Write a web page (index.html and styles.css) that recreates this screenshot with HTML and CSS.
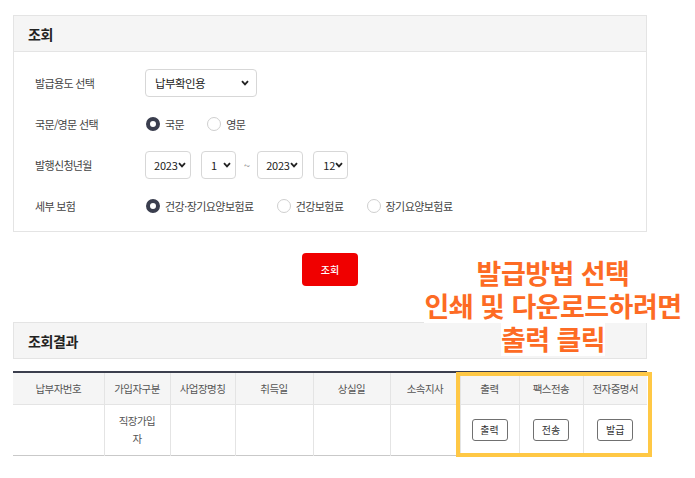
FILE: index.html
```html
<!DOCTYPE html>
<html lang="ko">
<head>
<meta charset="utf-8">
<title>조회</title>
<link rel="stylesheet" href="styles.css">
</head>
<body>
<div class="page">
  <section class="panel">
    <div class="panel-head">조회</div>
    <div class="form">
      <div class="row">
        <div class="label">발급용도 선택</div>
        <div class="ctrl">
          <div class="sel sel-wide"><span>납부확인용</span><svg class="chev" viewBox="0 0 8 6" width="8" height="6"><path d="M1 1.2 L4 4.4 L7 1.2" fill="none" stroke="#222" stroke-width="1.8"/></svg></div>
        </div>
      </div>
      <div class="row">
        <div class="label">국문/영문 선택</div>
        <div class="ctrl">
          <label class="opt"><span class="radio on"></span>국문</label>
          <label class="opt"><span class="radio"></span>영문</label>
        </div>
      </div>
      <div class="row">
        <div class="label">발행신청년월</div>
        <div class="ctrl">
          <div class="sel sel-year"><span>2023</span><svg class="chev" viewBox="0 0 8 6" width="8" height="6"><path d="M1 1.2 L4 4.4 L7 1.2" fill="none" stroke="#222" stroke-width="1.8"/></svg></div>
          <div class="sel sel-month"><span>1</span><svg class="chev" viewBox="0 0 8 6" width="8" height="6"><path d="M1 1.2 L4 4.4 L7 1.2" fill="none" stroke="#222" stroke-width="1.8"/></svg></div>
          <span class="tilde">~</span>
          <div class="sel sel-year"><span>2023</span><svg class="chev" viewBox="0 0 8 6" width="8" height="6"><path d="M1 1.2 L4 4.4 L7 1.2" fill="none" stroke="#222" stroke-width="1.8"/></svg></div>
          <div class="sel sel-month"><span>12</span><svg class="chev" viewBox="0 0 8 6" width="8" height="6"><path d="M1 1.2 L4 4.4 L7 1.2" fill="none" stroke="#222" stroke-width="1.8"/></svg></div>
        </div>
      </div>
      <div class="row">
        <div class="label">세부 보험</div>
        <div class="ctrl">
          <label class="opt"><span class="radio on"></span>건강·장기요양보험료</label>
          <label class="opt"><span class="radio"></span>건강보험료</label>
          <label class="opt"><span class="radio"></span>장기요양보험료</label>
        </div>
      </div>
    </div>
  </section>

  <div class="btn-area"><button class="btn-red">조회</button></div>

  <section class="result">
    <div class="panel-head solo">조회결과</div>
    <table class="grid">
      <colgroup>
        <col class="c1"><col class="c2"><col class="c3"><col class="c4"><col class="c5"><col class="c6"><col class="c7"><col class="c8"><col class="c9">
      </colgroup>
      <thead>
        <tr>
          <th>납부자번호</th><th>가입자구분</th><th>사업장명칭</th><th>취득일</th><th>상실일</th><th>소속지사</th><th>출력</th><th>팩스전송</th><th>전자증명서</th>
        </tr>
      </thead>
      <tbody>
        <tr>
          <td></td><td class="wrap">직장가입자</td><td></td><td></td><td></td><td></td>
          <td><button class="btn-sm">출력</button></td>
          <td><button class="btn-sm">전송</button></td>
          <td><button class="btn-sm">발급</button></td>
        </tr>
      </tbody>
    </table>
  </section>
</div>

<div class="highlight"></div>
<div class="note"><span>발급방법 선택</span><span>인쇄 및 다운로드하려면</span><span>출력 클릭</span></div>
</body>
</html>
```

FILE: styles.css
```css
* { box-sizing: border-box; }
html, body { margin: 0; padding: 0; background: #fff; }
body {
  font-family: "Noto Sans CJK KR", "Noto Sans", sans-serif;
  color: #444;
  width: 695px;
  height: 478px;
  position: relative;
  overflow: hidden;
}
.page {
  padding: 15px 0 0 13px;
  width: 647px;
}
.panel {
  border: 1px solid #e4e4e4;
}
.panel-head {
  height: 36px;
  background: #f5f5f5;
  border-bottom: 1px solid #e4e4e4;
  padding-left: 14px;
  display: flex;
  align-items: center;
  font-size: 14px;
  font-weight: 700;
  color: #222;
  letter-spacing: -0.03em;
}
.panel-head.solo {
  height: 37px;
  border: 1px solid #e4e4e4;
}
.form {
  padding: 17px 0 11px 21px;
  display: flex;
  flex-direction: column;
  gap: 13px;
}
.row {
  display: flex;
  align-items: center;
  height: 28px;
}
.label {
  width: 110px;
  font-size: 11px;
  color: #444;
  letter-spacing: -0.06em;
}
.ctrl {
  display: flex;
  align-items: center;
  font-size: 11px;
  color: #444;
}
.sel {
  height: 28px;
  border: 1px solid #d7d7d7;
  border-radius: 4px;
  display: flex;
  align-items: center;
  justify-content: space-between;
  font-size: 11.5px;
  color: #222;
  background: #fff;
}
.sel-wide { width: 112px; padding: 0 7px 0 9px; letter-spacing: -0.05em; }
.sel-year { width: 46px; padding: 0 4px 0 8px; font-size: 11px; letter-spacing: -0.02em; }
.sel-month { width: 35px; padding: 0 4px 0 9px; font-size: 11px; margin-left: 10px; }
.tilde { color: #888; font-size: 11px; margin: 0 7px 0 8px; }
.chev { flex: none; }
.opt {
  display: flex;
  align-items: center;
  margin-right: 22px;
  letter-spacing: -0.05em;
}
.radio {
  width: 14px;
  height: 14px;
  border-radius: 50%;
  border: 1px solid #cfcfcf;
  background: #fff;
  margin: 0 5px 0 1px;
  flex: none;
}
.radio.on {
  border: 4px solid #3a3e4e;
}
.btn-area {
  display: flex;
  justify-content: center;
  margin-top: 21px;
}
.btn-red {
  width: 56px;
  height: 33px;
  border: 0;
  border-radius: 4px;
  background: #f00000;
  color: #fff;
  font-family: inherit;
  font-size: 10px;
  font-weight: 500;
  padding: 0;
}
.result { margin-top: 36px; }
.grid {
  margin-top: 12px;
  width: 634px;
  border-collapse: collapse;
  table-layout: fixed;
  border-top: 2px solid #3c3f4e;
  border-bottom: 1px solid #c9c9c9;
  font-size: 10.5px;
  color: #555;
  letter-spacing: -0.05em;
}
.c1 { width: 91px; } .c2 { width: 66px; } .c3 { width: 65px; } .c4 { width: 78px; }
.c5 { width: 77px; } .c6 { width: 70px; } .c7 { width: 59px; } .c8 { width: 64px; } .c9 { width: 64px; }
.grid th {
  height: 32px;
  background: #f5f5f5;
  font-weight: 400;
  border-left: 1px solid #e4e4e4;
  border-bottom: 1px solid #e4e4e4;
  padding: 0;
}
.grid td {
  height: 51px;
  border-left: 1px solid #e4e4e4;
  text-align: center;
  padding: 0 10px;
  line-height: 18px;
}
.grid th:first-child, .grid td:first-child { border-left: 0; }
.btn-sm {
  width: 36px;
  height: 22px;
  border: 1px solid #707070;
  border-radius: 3px;
  background: #fff;
  font-family: inherit;
  font-size: 10px;
  color: #333;
  padding: 0;
}
.highlight {
  position: absolute;
  left: 456px;
  top: 372px;
  width: 196px;
  height: 85px;
  border: 4px solid #ffc845;
}
.note {
  position: absolute;
  left: 400px;
  top: 257px;
  width: 306px;
  display: flex;
  flex-direction: column;
  align-items: center;
  font-size: 27px;
  line-height: 32px;
  font-weight: 700;
  color: #fd6b24;
  letter-spacing: -0.02em;
}
.note span { display: block; height: 33px; background: #fff; }
```
